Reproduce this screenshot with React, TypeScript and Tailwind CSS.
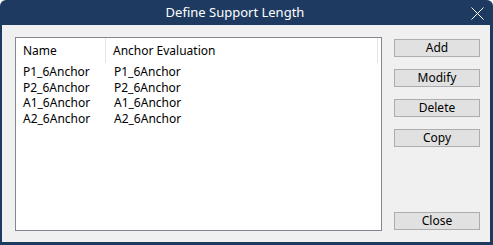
import React from "react";

const rows = [
  ["P1_6Anchor", "P1_6Anchor"],
  ["P2_6Anchor", "P2_6Anchor"],
  ["A1_6Anchor", "A1_6Anchor"],
  ["A2_6Anchor", "A2_6Anchor"],
];

function Btn({ label }: { label: string }) {
  return (
    <button className="h-[18px] w-[86px] border border-[#adadad] bg-[#e1e1e1] text-[12px] leading-[16px] text-black">
      {label}
    </button>
  );
}

export default function App() {
  return (
    <div
      className="w-[493px] h-[245px] bg-[#1e3a60] rounded-t-[6px] flex flex-col px-[2px] pb-[3px] pr-[3px]"
      style={{ fontFamily: '"Noto Sans", "Noto Sans CJK KR", sans-serif' }}
    >
      <div className="h-[25px] flex items-center justify-center relative text-white text-[13px]">
        <span className="ml-[-22px]">Define Support Length</span>
        <svg className="absolute right-[6px] top-[7px]" width="13" height="13" viewBox="0 0 13 13">
          <path d="M0.5 0.5 L12.5 12.5 M12.5 0.5 L0.5 12.5" stroke="white" strokeWidth="1" />
        </svg>
      </div>
      <div className="flex-1 bg-[#f0f0f0] flex pl-[13px] pt-[12px] pb-[11px]">
        <div className="w-[367px] bg-white border border-[#828790] flex flex-col text-[12px] text-black">
          <div className="h-[25px] flex items-center">
            <div className="w-[90px] h-full flex items-center pl-[7px] border-r border-[#e5e5e5]">Name</div>
            <div className="w-[272px] h-full flex items-center pl-[7px] border-r border-[#e5e5e5]">Anchor Evaluation</div>
          </div>
          <div className="flex flex-col pt-[1px]">
            {rows.map((r) => (
              <div key={r[0]} className="h-[15.7px] flex items-center leading-none">
                <div className="w-[91px] pl-[7px]">{r[0]}</div>
                <div className="pl-[7px]">{r[1]}</div>
              </div>
            ))}
          </div>
        </div>
        <div className="ml-[12px] flex flex-col justify-between">
          <div className="flex flex-col gap-[12px] mt-[2px]">
            <Btn label="Add" />
            <Btn label="Modify" />
            <Btn label="Delete" />
            <Btn label="Copy" />
          </div>
          <div className="mb-[0px]">
            <Btn label="Close" />
          </div>
        </div>
      </div>
    </div>
  );
}
